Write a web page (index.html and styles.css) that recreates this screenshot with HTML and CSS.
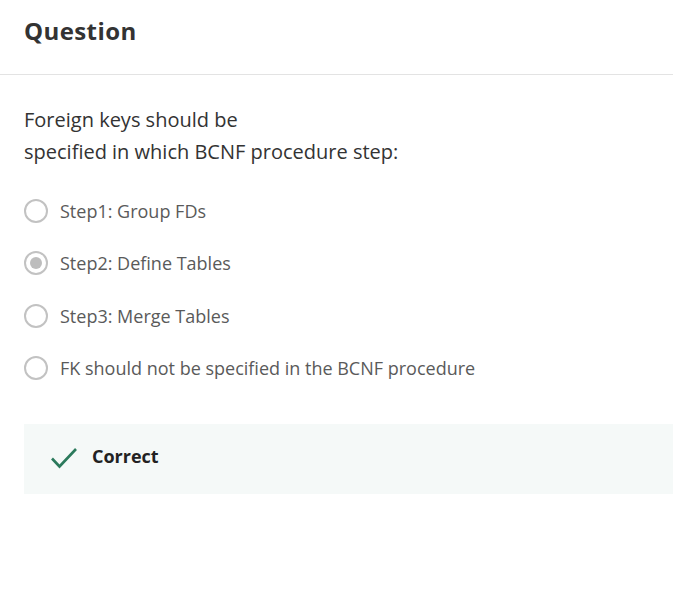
FILE: index.html
```html
<!DOCTYPE html>
<html>
<head>
<meta charset="utf-8">
<link rel="stylesheet" href="styles.css">
</head>
<body>
<div class="header"><h1 class="title">Question</h1></div>
<div class="content">
  <p class="prompt">Foreign keys should be<br>specified in which BCNF procedure step:</p>
  <div class="options">
    <label class="option"><span class="radio"></span><span class="label">Step1: Group FDs</span></label>
    <label class="option"><span class="radio checked"></span><span class="label">Step2: Define Tables</span></label>
    <label class="option"><span class="radio"></span><span class="label">Step3: Merge Tables</span></label>
    <label class="option"><span class="radio"></span><span class="label">FK should not be specified in the BCNF procedure</span></label>
  </div>
  <div class="feedback">
    <svg class="check" width="28" height="24" viewBox="0 0 28 24"><path d="M2 12.5 L9.5 20.5 L26 3" fill="none" stroke="#2b7a5c" stroke-width="2.6"/></svg>
    <span class="fb-text">Correct</span>
  </div>
</div>
</body>
</html>
```
FILE: styles.css
```css
html, body { margin: 0; padding: 0; background: #fff; }
body { font-family: "Open Sans", sans-serif; color: #333; overflow: hidden; }
.header { height: 75px; border-bottom: 1px solid #e3e3e3; display: flex; align-items: center; padding-left: 24px; box-sizing: border-box; }
.title { margin: 0 0 13px 0; font-size: 24px; font-weight: 700; color: #333; letter-spacing: 0.4px; }
.content { padding-left: 24px; }
.prompt { margin: 29px 0 0 0; font-size: 20px; line-height: 32px; color: #333; }
.options { margin-top: 31px; display: flex; flex-direction: column; gap: 28.3px; }
.option { display: flex; align-items: center; height: 24px; }
.radio { width: 24px; height: 24px; box-sizing: border-box; border: 2px solid #c2c2c2; border-radius: 50%; display: flex; align-items: center; justify-content: center; }
.radio.checked::after { content: ""; width: 12px; height: 12px; border-radius: 50%; background: #bdbdbd; }
.label { margin-left: 12px; font-size: 18px; color: #5a5a5a; }
.feedback { margin-top: 44px; height: 70px; background: #f5f9f8; display: flex; align-items: center; padding-left: 26px; }
.check { margin-bottom: 2px; }
.fb-text { margin-left: 14px; margin-bottom: 5px; font-size: 18px; font-weight: 700; color: #222; letter-spacing: 0; }
```
